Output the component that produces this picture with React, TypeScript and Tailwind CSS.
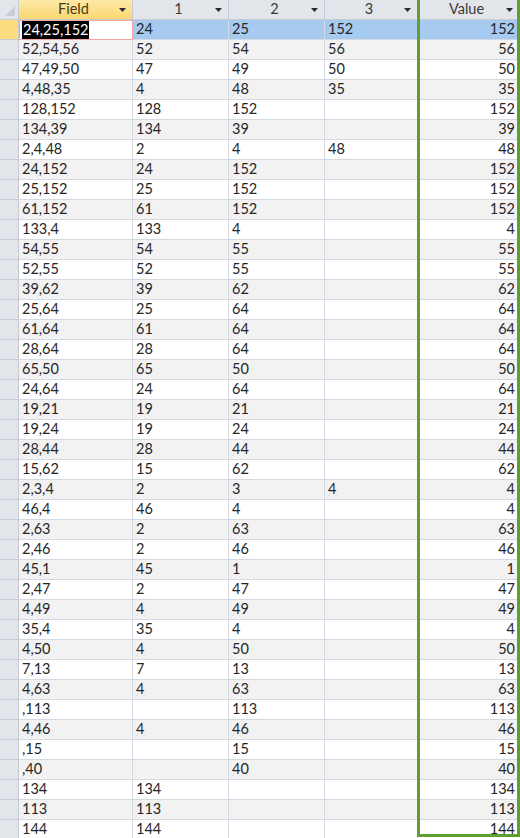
import React from "react";

const rows: string[][] = [
  ["24,25,152", "24", "25", "152", "152"],
  ["52,54,56", "52", "54", "56", "56"],
  ["47,49,50", "47", "49", "50", "50"],
  ["4,48,35", "4", "48", "35", "35"],
  ["128,152", "128", "152", "", "152"],
  ["134,39", "134", "39", "", "39"],
  ["2,4,48", "2", "4", "48", "48"],
  ["24,152", "24", "152", "", "152"],
  ["25,152", "25", "152", "", "152"],
  ["61,152", "61", "152", "", "152"],
  ["133,4", "133", "4", "", "4"],
  ["54,55", "54", "55", "", "55"],
  ["52,55", "52", "55", "", "55"],
  ["39,62", "39", "62", "", "62"],
  ["25,64", "25", "64", "", "64"],
  ["61,64", "61", "64", "", "64"],
  ["28,64", "28", "64", "", "64"],
  ["65,50", "65", "50", "", "50"],
  ["24,64", "24", "64", "", "64"],
  ["19,21", "19", "21", "", "21"],
  ["19,24", "19", "24", "", "24"],
  ["28,44", "28", "44", "", "44"],
  ["15,62", "15", "62", "", "62"],
  ["2,3,4", "2", "3", "4", "4"],
  ["46,4", "46", "4", "", "4"],
  ["2,63", "2", "63", "", "63"],
  ["2,46", "2", "46", "", "46"],
  ["45,1", "45", "1", "", "1"],
  ["2,47", "2", "47", "", "47"],
  ["4,49", "4", "49", "", "49"],
  ["35,4", "35", "4", "", "4"],
  ["4,50", "4", "50", "", "50"],
  ["7,13", "7", "13", "", "13"],
  ["4,63", "4", "63", "", "63"],
  [",113", "", "113", "", "113"],
  ["4,46", "4", "46", "", "46"],
  [",15", "", "15", "", "15"],
  [",40", "", "40", "", "40"],
  ["134", "134", "", "", "134"],
  ["113", "113", "", "", "113"],
  ["144", "144", "", "", "144"],
];

function Arrow() {
  return (
    <svg width="7" height="4" viewBox="0 0 7 4" className="absolute right-[6px] top-[8px]">
      <path d="M0 0H7L3.5 4Z" fill="#2b2b2b" />
    </svg>
  );
}

function Header({ label, w, active }: { label: string; w: string; active?: boolean }) {
  return (
    <div
      className={`relative h-[20px] shrink-0 border-r border-b border-[#c5cbd4] flex items-center justify-center text-[#3a3a3a] ${w} ${
        active ? "bg-gradient-to-b from-[#fde9a8] to-[#f9d66f] text-[#4a3a10]" : "bg-[#e2e5e9]"
      }`}
    >
      <span className="pr-[4px]">{label}</span>
      <Arrow />
    </div>
  );
}

export default function App() {
  return (
    <div
      className="relative w-[520px] h-[838px] overflow-hidden bg-white text-[14.5px] leading-none text-[#262626]"
      style={{ fontFamily: "Lato, 'Open Sans', sans-serif" }}
    >
      <div className="flex">
        <div className="relative w-[19px] h-[20px] shrink-0 bg-[#e2e5e9] border-r border-b border-[#c5cbd4]">
          <svg width="12" height="12" viewBox="0 0 12 12" className="absolute right-[2px] bottom-[2px]">
            <path d="M11 1V11H1Z" fill="#c9ced6" />
          </svg>
        </div>
        <Header label="Field" w="w-[114px]" active />
        <Header label="1" w="w-[96px]" />
        <Header label="2" w="w-[96px]" />
        <Header label="3" w="w-[93px]" />
        <Header label="Value" w="w-[102px]" />
      </div>
      {rows.map((r, i) => {
        const sel = i === 0;
        const bg = sel ? "bg-[#a6caf0]" : i % 2 === 1 ? "bg-[#f2f2f2]" : "bg-white";
        return (
          <div key={i} className="flex h-[20px]">
            <div
              className={`w-[19px] shrink-0 border-r border-b border-[#c5cbd4] ${
                sel ? "bg-[#fbdc7e]" : "bg-[#e2e5e9]"
              }`}
            />
            {sel ? (
              <div className="w-[114px] shrink-0 h-[20px] bg-white border border-[#f3a5a5] flex items-center pl-[2px]">
                <span className="bg-black text-white px-[1px] py-[2px]">{r[0]}</span>
              </div>
            ) : (
              <div className={`w-[114px] shrink-0 border-r border-b border-[#d5dae2] flex items-center pl-[3px] ${bg}`}>
                {r[0]}
              </div>
            )}
            <div className={`w-[96px] shrink-0 border-r border-b border-[#d5dae2] flex items-center pl-[3px] ${bg}`}>
              {r[1]}
            </div>
            <div className={`w-[96px] shrink-0 border-r border-b border-[#d5dae2] flex items-center pl-[3px] ${bg}`}>
              {r[2]}
            </div>
            <div className={`w-[93px] shrink-0 border-r border-b border-[#d5dae2] flex items-center pl-[3px] ${bg}`}>
              {r[3]}
            </div>
            <div className={`w-[102px] shrink-0 border-b border-[#d5dae2] flex items-center justify-end pr-[5px] ${bg}`}>
              {r[4]}
            </div>
          </div>
        );
      })}
      <div className="absolute left-[417px] top-0 w-[103px] h-[837px] border-l-[3px] border-r-[3px] border-b-[3px] border-[#5e9f2e] pointer-events-none" />
    </div>
  );
}
